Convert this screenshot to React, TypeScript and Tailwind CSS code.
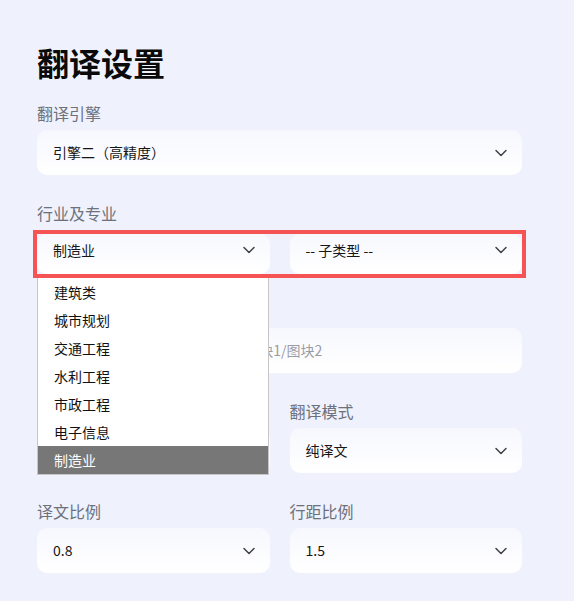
import { ChevronDown } from "lucide-react";

const font = { fontFamily: '"Noto Sans CJK SC", "Noto Sans", sans-serif' };

const industries = ["建筑类", "城市规划", "交通工程", "水利工程", "市政工程", "电子信息", "制造业"];

const Select = ({ value, className = "" }: { value: string; className?: string }) => (
  <div
    className={`flex items-center justify-between pl-4 pr-[11px] rounded-[10px] bg-gradient-to-b from-[#f7f8fe] to-white text-[14px] text-[#161616] ${className}`}
  >
    <span>{value}</span>
    <ChevronDown size={20} strokeWidth={1.8} className="text-[#3f4147]" />
  </div>
);

const Label = ({ children }: { children: string }) => (
  <div className="h-6 leading-6 mb-[5px] text-[16px] text-[#6d717b]">{children}</div>
);

export default function App() {
  return (
    <div className="min-h-screen bg-[#eff2fd]" style={font}>
      <div className="w-[485px] ml-[37px] pt-[42px] pb-10">
        <h1 className="h-10 leading-10 text-[32px] font-bold text-[#0a0a0a]">翻译设置</h1>

        <div className="mt-[19px]">
          <Label>翻译引擎</Label>
          <Select value="引擎二（高精度）" className="h-[45px]" />
        </div>

        <div className="mt-[26px]">
          <Label>行业及专业</Label>
          <div className="relative mt-[2px] -mx-1 border-4 border-[#f65355]">
            <div className="grid grid-cols-2 gap-5">
              <Select value="制造业" className="h-10 pb-2" />
              <Select value="-- 子类型 --" className="h-10 pb-2" />
            </div>
            <ul className="absolute z-10 left-0 top-[calc(100%+4px)] w-[232px] bg-white border border-t-0 border-[#c6c6c6] text-[14px] text-[#111]">
              {industries.map((item) => (
                <li
                  key={item}
                  className={`h-7 leading-7 pl-4 ${item === "制造业" ? "bg-[#777777] text-white" : ""}`}
                >
                  {item}
                </li>
              ))}
            </ul>
          </div>
        </div>

        <div className="mt-[21px]">
          <Label>指定图块</Label>
          <div className="h-[45px] flex items-center pl-4 rounded-[10px] bg-gradient-to-b from-[#f7f8fe] to-white text-[14px] text-[#9a9ca3]">
            多个图块请用斜杠分隔，例如:&nbsp; 图块1/图块2
          </div>
        </div>

        <div className="mt-[26px] grid grid-cols-2 gap-5">
          <div>
            <Label>翻译范围</Label>
            <Select value="全部内容" className="h-[45px]" />
          </div>
          <div>
            <Label>翻译模式</Label>
            <Select value="纯译文" className="h-[45px]" />
          </div>
        </div>

        <div className="mt-[26px] grid grid-cols-2 gap-5">
          <div>
            <Label>译文比例</Label>
            <Select value="0.8" className="h-[45px]" />
          </div>
          <div>
            <Label>行距比例</Label>
            <Select value="1.5" className="h-[45px]" />
          </div>
        </div>
      </div>
    </div>
  );
}
